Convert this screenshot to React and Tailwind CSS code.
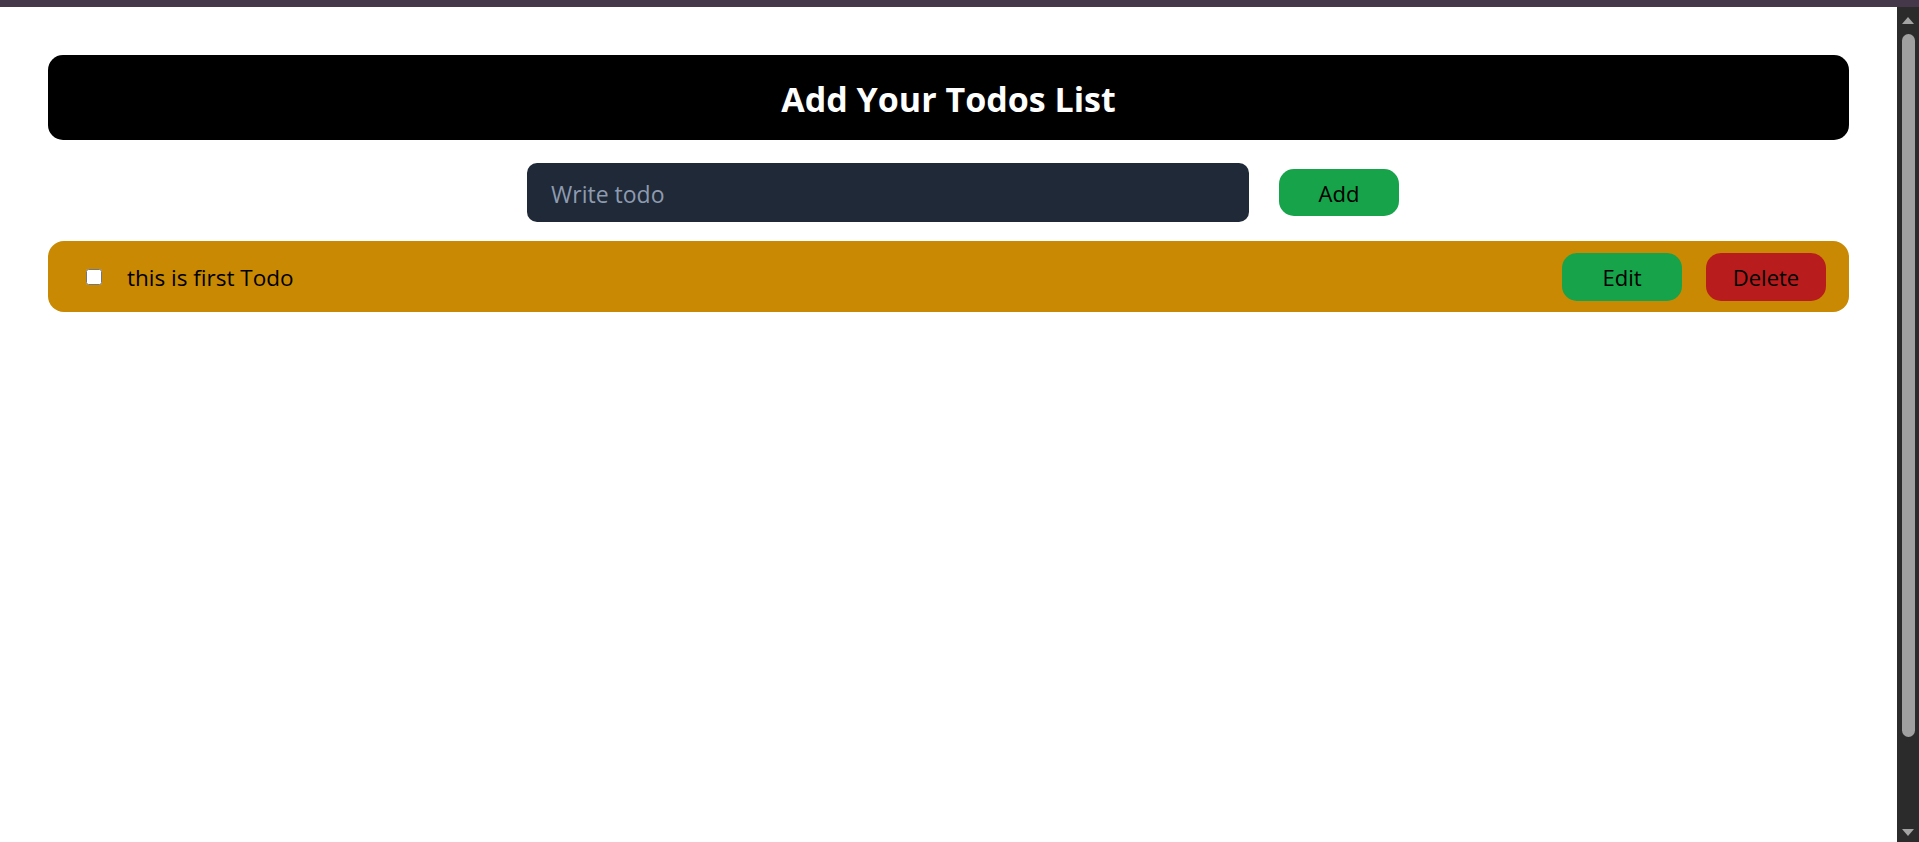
import { useState } from 'react'

function ScrollbarColumn() {
  return (
    <div className="w-[22px] shrink-0 bg-[#2b2b2b] flex flex-col items-center">
      <div className="h-[27px] w-full flex items-center justify-center">
        <svg width="12" height="7" viewBox="0 0 12 7">
          <path d="M6 0 L12 7 L0 7 Z" fill="#a3a3a3" />
        </svg>
      </div>
      <div className="w-[13px] h-[703px] ml-[1px] rounded-full bg-[#a0a0a0]" />
      <div className="flex-1" />
      <div className="h-[20px] w-full flex items-center justify-center">
        <svg width="12" height="7" viewBox="0 0 12 7">
          <path d="M0 0 L12 0 L6 7 Z" fill="#a3a3a3" />
        </svg>
      </div>
    </div>
  )
}

export default function App() {
  const [todo, setTodo] = useState('')
  const [todos] = useState([{ id: 1, text: 'this is first Todo', done: false }])

  return (
    <div className="h-screen flex flex-col bg-white font-['Open_Sans',sans-serif]">
      {/* window frame strip */}
      <div className="h-[7px] bg-[#45384b] shrink-0" />
      <div className="flex-1 flex min-h-0">
        <main className="flex-1 overflow-hidden p-12">
          <div className="h-[85px] rounded-[15px] bg-black flex items-center justify-center pt-[2px]">
            <h1 className="text-white font-bold text-[34px] leading-none">Add Your Todos List</h1>
          </div>

          <div className="mt-[23px] flex justify-center items-center pl-[29px]">
            <input
              type="text"
              value={todo}
              onChange={(e) => setTodo(e.target.value)}
              placeholder="Write todo"
              className="w-[722px] h-[59px] rounded-[10px] bg-[#1f2937] px-[24px] pt-[2px] text-[23px] text-white placeholder:text-[#8e9aaf] outline-none"
            />
            <button className="ml-[30px] w-[120px] h-[47px] rounded-[15px] bg-[#16a34a] pt-[2px] text-[22px] text-black">
              Add
            </button>
          </div>

          <div className="mt-[19px] space-y-4">
            {todos.map((t) => (
              <div key={t.id} className="h-[71px] rounded-[16px] bg-[#c98902] flex items-center pl-[38px] pr-[23px]">
                <input type="checkbox" defaultChecked={t.done} className="w-4 h-4 shrink-0" />
                <span className="ml-[25px] flex-1 pt-[2px] text-[22.5px] text-black">{t.text}</span>
                <button className="w-[120px] h-[48px] rounded-[15px] bg-[#16a34a] pt-[2px] text-[22px] text-black">Edit</button>
                <button className="ml-[24px] w-[120px] h-[48px] rounded-[15px] bg-[#b91c1c] pt-[2px] text-[22px] text-black">Delete</button>
              </div>
            ))}
          </div>
        </main>
        <ScrollbarColumn />
      </div>
    </div>
  )
}
